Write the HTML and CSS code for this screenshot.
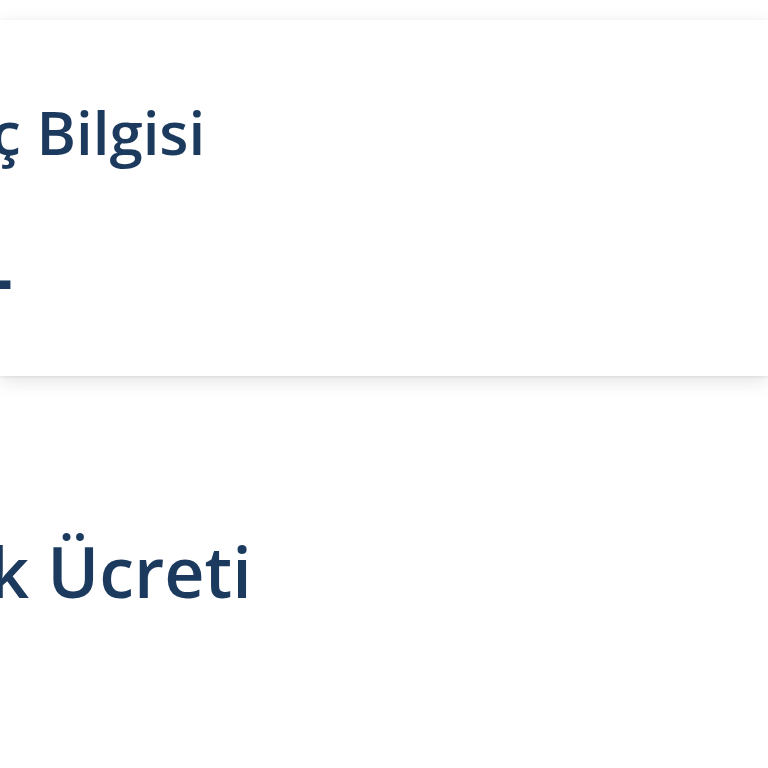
FILE: index.html
```html
<!DOCTYPE html>
<html lang="tr">
<head>
<meta charset="UTF-8" />
<title>Bilgi</title>
<link rel="stylesheet" href="styles.css">
</head>
<body>

<div class="card">
  <h2 class="card-title">ç Bilgisi</h2>
  <div class="card-value">-</div>
</div>

<div class="section">
  <h2 class="section-title">k Ücreti</h2>
</div>

</body>
</html>
```

FILE: styles.css
```css
body {
  margin: 0;
  background: #fff;
  font-family: "Open Sans", "Noto Sans", sans-serif;
  color: #1b3a5e;
}

/* üst kart */
.card {
  margin-top: 20px;
  height: 356px;
  box-sizing: border-box;
  padding-top: 76px;
  background: #fff;
  box-shadow: 0 5px 18px rgba(0,0,0,0.11), 0 1px 3px rgba(0,0,0,0.08);
  overflow: hidden;
}
.card-title {
  margin: 0 0 67px -9px;
  font-size: 60px;
  font-weight: 600;
  line-height: 72px;
}
.card-value {
  margin-left: -10px;
  font-size: 70px;
  font-weight: 700;
  line-height: 84px;
}

/* alt bölüm */
.section {
  margin-top: 153px;
}
.section-title {
  margin: 0 0 0 -11px;
  font-size: 70px;
  font-weight: 600;
  line-height: 84px;
}
```
